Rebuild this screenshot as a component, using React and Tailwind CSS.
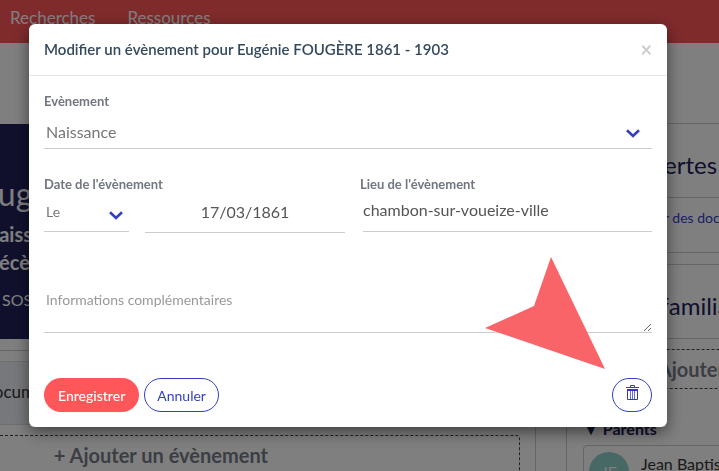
function Chevron({ className }) {
  return (
    <svg
      viewBox="0 0 14 9"
      className={`pointer-events-none absolute h-[9px] w-[14px] ${className}`}
      fill="none"
      stroke="#3340c4"
      strokeWidth="2.6"
    >
      <path d="M1 1.2 L7 7 L13 1.2" />
    </svg>
  );
}

function TrashIcon() {
  return (
    <svg viewBox="0 0 13 16" className="h-4 w-[13px]" fill="none" stroke="#2f3bc0">
      <path d="M4.5 2.5 V0.5 H8.5 V2.5" />
      <path d="M0 2.5 H13" />
      <path d="M1 5 H12" strokeWidth="2" />
      <path d="M1.5 5 V14.5 H11.5 V5" />
      <path d="M4.5 5 V14 M6.5 5 V14 M8.5 5 V14" strokeOpacity="0.75" />
    </svg>
  );
}

function Navbar() {
  return (
    <nav className="flex h-[43px] gap-8 bg-[#ff5659] px-[10px] pt-[5px] text-[17px] leading-[26px] text-white">
      <a href="#recherches">Recherches</a>
      <a href="#ressources">Ressources</a>
    </nav>
  );
}

function Profile() {
  return (
    <div className="-ml-6 mt-px flex w-[560px] shrink-0 flex-col">
      <div className="h-[215px] bg-[#21215a] pt-12 text-white">
        <h1 className="pl-1 text-[32px] leading-[44px]">Eugénie</h1>
        <p className="pl-2 pt-1 text-[20px] font-bold leading-7">Naissance</p>
        <p className="pl-2 text-[20px] font-bold leading-7">Décès</p>
        <p className="pl-[26px] pt-3 text-[16px] leading-6">SOSA</p>
      </div>

      <div className="mt-[11px] grow border-r border-t border-[#ccc] pr-[15px] pt-[10px]">
        <div className="h-16 border border-[#ddd] bg-[#eef1f6] pl-1 pt-[18px] text-[17px] leading-6 text-[#333]">
          Documents
        </div>
        <button className="mt-[10px] block h-12 w-full rounded border border-dashed border-[#444] pb-2 pr-[251px] text-right text-[20px] font-bold text-[#777c88]">
          + Ajouter un évènement
        </button>
      </div>
    </div>
  );
}

function Family() {
  return (
    <div className="ml-[30px] grow whitespace-nowrap text-[#21215a]">
      <section className="h-[130px] border border-[#ccc]">
        <h2 className="h-[74px] border-b border-[#ccc] pl-4 pt-[25px] text-[24px] leading-8">
          Découvertes
        </h2>
        <a href="#documents" className="block pl-14 pt-2 text-[14px] leading-6 text-[#3340c4]">
          Ajouter des documents
        </a>
      </section>

      <section className="mt-[11px] border border-[#ccc]">
        <h2 className="h-[74px] border-b border-[#ccc] pl-7 pt-[25px] text-[24px] leading-8">
          Arbre familial
        </h2>
        <button className="ml-4 mt-[10px] block h-10 w-full rounded border border-dashed border-[#444] pl-[58px] text-left text-[20px] font-bold text-[#777c88]">
          + Ajouter
        </button>
        <h3 className="flex gap-1 pl-4 pt-7 text-[16px] font-bold leading-6">
          <span>▼</span>
          Parents
        </h3>
        <div className="ml-4 mt-1 flex h-16 gap-3 rounded border border-[#ccc] pl-[5px] pt-[6px]">
          <div className="flex size-10 items-center justify-center rounded-full bg-[#8fd0c8] text-[16px] text-white">
            JF
          </div>
          <p className="text-[16px] leading-6 text-[#333]">Jean Baptiste</p>
        </div>
      </section>
    </div>
  );
}

function EventModal() {
  return (
    <div
      role="dialog"
      aria-labelledby="modal-title"
      className="relative rounded-md bg-white shadow-[0_5px_15px_rgba(0,0,0,0.5)]"
    >
      <div className="flex items-center justify-between border-b border-[#e5e5e5] px-[15px] pb-[14px] pt-[13px]">
        <h4 id="modal-title" className="text-[15px] font-semibold leading-6 text-[#34495e]">
          Modifier un évènement pour Eugénie FOUGÈRE 1861 - 1903
        </h4>
        <button aria-label="Fermer" className="text-[20px] font-bold leading-6 text-[#ccc]">
          ×
        </button>
      </div>

      <form className="px-[15px] pb-[15px] pt-[15px]" onSubmit={(e) => e.preventDefault()}>
        <label htmlFor="type" className="block text-[13px] font-bold leading-5 text-[#717680]">
          Evènement
        </label>
        <div className="relative border-b border-[#ccc]">
          <select
            id="type"
            className="block h-[37px] w-full appearance-none bg-transparent pl-[2px] pt-1 text-[16px] text-[#777]"
          >
            <option>Naissance</option>
          </select>
          <Chevron className="bottom-[10px] right-3" />
        </div>

        <div className="flex gap-[15px] pt-[25px]">
          <div className="w-[301px]">
            <label htmlFor="date" className="block text-[13px] font-bold leading-5 text-[#717680]">
              Date de l'évènement
            </label>
            <div className="flex items-start gap-4">
              <div className="relative w-[85px] border-b border-[#ccc]">
                <select
                  aria-label="Précision de la date"
                  className="block h-[37px] w-full appearance-none bg-transparent pb-[2px] pl-[2px] text-[14px] text-[#777]"
                >
                  <option>Le</option>
                </select>
                <Chevron className="bottom-[11px] right-[6px]" />
              </div>
              <input
                id="date"
                defaultValue="17/03/1861"
                className="h-[39px] w-[200px] border-b border-[#ccc] pb-1 text-center text-[16px] text-[#555]"
              />
            </div>
          </div>

          <div className="grow">
            <label htmlFor="lieu" className="block text-[13px] font-bold leading-5 text-[#717680]">
              Lieu de l'évènement
            </label>
            <div className="pl-[3px]">
              <input
                id="lieu"
                defaultValue="chambon-sur-voueize-ville"
                className="h-[38px] w-full border-b border-[#ccc] pb-[6px] text-[16px] text-[#555]"
              />
            </div>
          </div>
        </div>

        <textarea
          aria-label="Informations complémentaires"
          placeholder="Informations complémentaires"
          className="mt-[50px] block h-[50px] w-full border-b border-[#ccc] pl-[2px] pt-[7px] text-[14px] leading-5 placeholder:text-[#999]"
        />

        <div className="flex items-center gap-[5px] pt-[45px]">
          <button className="h-[34px] rounded-full bg-[#ff5659] px-[14px] text-[14px] font-medium text-white">
            Enregistrer
          </button>
          <button
            type="button"
            className="h-[34px] rounded-full border border-[#3340c4] px-3 text-[14px] text-[#3340c4]"
          >
            Annuler
          </button>
          <button
            type="button"
            aria-label="Supprimer"
            className="ml-auto flex h-[34px] w-10 justify-center rounded-full border border-[#3340c4] pt-[6px]"
          >
            <TrashIcon />
          </button>
        </div>
      </form>

      {/* arrow pointing at the delete button */}
      <svg
        viewBox="0 0 121 113"
        className="pointer-events-none absolute bottom-[57px] right-[61px] h-[113px] w-[121px]"
      >
        <path d="M66 0 L120 112 L0 71 L49 49 Z" fill="#f96468" />
      </svg>
    </div>
  );
}

function App() {
  return (
    <div className="h-screen overflow-hidden bg-white font-['Lato',sans-serif]">
      <Navbar />
      <main className="mt-[80px] flex">
        <Profile />
        <Family />
      </main>

      <div className="fixed inset-0 bg-black/50 pl-[29px] pr-[52px] pt-6">
        <EventModal />
      </div>
    </div>
  );
}

export default App;
